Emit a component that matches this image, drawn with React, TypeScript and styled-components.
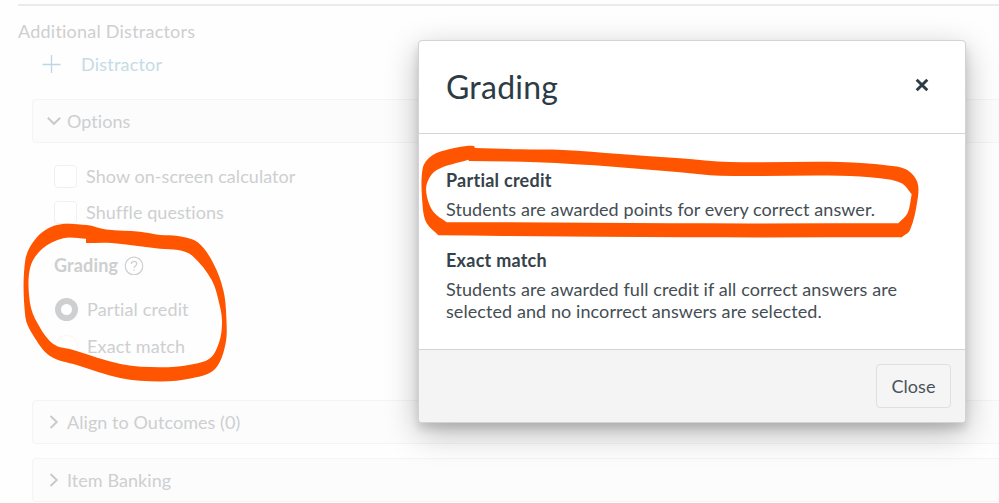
import React from "react";
import styled, { createGlobalStyle } from "styled-components";

const GlobalStyle = createGlobalStyle`
  *, *::before, *::after { box-sizing: border-box; }
  body { margin: 0; background: #fff; overflow: hidden; }
  body, button { font-family: Lato, "Liberation Sans", sans-serif; }
`;

const Screen = styled.div`
  position: relative;
  width: 999px;
  height: 503px;
  overflow: hidden;
  background: #fefefe;
`;

const Page = styled.main`
  display: flex;
  flex-direction: column;
  height: 100%;
  padding-top: 4px;
  font-size: 18px;
  line-height: 24px;
  letter-spacing: 0.06px;
  color: #cdcfd0;
`;

const Divider = styled.hr`
  width: 100%;
  height: 2px;
  margin: 0 0 0 18px;
  border: 0;
  background: #ebebec;
`;

const SectionLabel = styled.div`
  margin: 13px 0 0 18px;
  letter-spacing: 0.23px;
`;

const AddLink = styled.div`
  display: flex;
  align-items: center;
  gap: 19px;
  margin: 9px 0 0 42px;
  letter-spacing: 0.2px;
  color: #c5dbe6;
`;

const Panel = styled.section<{ $top: number }>`
  display: flex;
  flex: none;
  align-items: center;
  gap: 6px;
  width: 1000px;
  height: 44px;
  margin: ${({ $top }) => $top}px 0 0 32px;
  padding-left: 14px;
  border: 1px solid #f4f4f4;
  border-radius: 4px;
  background: #fcfcfc;
`;

const OptionsBody = styled.div`
  display: flex;
  flex: none;
  flex-direction: column;
  height: 257px;
  padding: 21px 0 0 54px;
`;

const Choice = styled.label<{ $gap?: number; $top?: number }>`
  display: flex;
  align-items: center;
  gap: ${({ $gap = 9 }) => $gap}px;
  height: 24px;
  margin-top: ${({ $top = 0 }) => $top}px;
`;

const CheckMark = styled.span`
  width: 23px;
  height: 23px;
  border: 1px solid #f0f0f0;
  border-radius: 4px;
  background: #fff;
`;

const RadioMark = styled.span<{ $checked?: boolean }>`
  width: 23px;
  height: 23px;
  border: ${({ $checked }) => ($checked ? "6px solid #cdcfd1" : "1px solid #fbf5f2")};
  border-radius: 50%;
  background: #fff;
`;

const RadioGroup = styled.div`
  padding: 20px 0 0 1px;
  letter-spacing: 0.14px;
`;

const GroupTitle = styled.div`
  display: flex;
  align-items: center;
  gap: 6px;
  height: 24px;
  margin-top: 29px;
  font-weight: 700;
  letter-spacing: 0.15px;
`;

const Dialog = styled.div`
  position: absolute;
  top: 40px;
  left: 418px;
  display: flex;
  flex-direction: column;
  width: 548px;
  height: 383px;
  border: 1px solid #d2d3d4;
  border-radius: 4px;
  background: #fff;
  color: #444d54;
  box-shadow: 0 6px 8px rgba(0, 0, 0, 0.12), 0 10px 32px rgba(0, 0, 0, 0.27);
`;

const DialogHeader = styled.header`
  display: flex;
  align-items: center;
  justify-content: space-between;
  height: 93px;
  padding: 0 36px 0 27px;
  border-bottom: 1px solid #d3d4d5;
`;

const DialogTitle = styled.h2`
  margin: 0;
  font-size: 32px;
  font-weight: 400;
  line-height: 40px;
  letter-spacing: 0.25px;
  color: #2d3b45;
`;

const IconButton = styled.button`
  display: flex;
  margin-top: -4px;
  padding: 0;
  border: 0;
  background: none;
`;

const DialogBody = styled.div`
  display: flex;
  flex: 1;
  flex-direction: column;
  gap: 28px;
  padding: 34px 27px 0;
  font-size: 18px;
`;

const Term = styled.h3`
  margin: 0 0 6px;
  font-size: 18px;
  font-weight: 700;
  line-height: 24px;
  letter-spacing: 0.25px;
  color: #36424b;
`;

const Description = styled.p`
  margin: 0;
  line-height: 22px;
  letter-spacing: 0.08px;
  white-space: pre-line;
`;

const DialogFooter = styled.footer`
  display: flex;
  align-items: center;
  justify-content: flex-end;
  height: 73px;
  padding-right: 14px;
  border-top: 1px solid #d3d4d5;
  border-radius: 0 0 3px 3px;
  background: #f4f4f4;
`;

const CloseButton = styled.button`
  width: 75px;
  height: 44px;
  padding: 0;
  border: 1px solid #dedfe0;
  border-radius: 4px;
  background: #f5f5f5;
  font-size: 18px;
  letter-spacing: 0.06px;
  color: #4a5258;
`;

const Ink = styled.svg`
  position: absolute;
  inset: 0;
  pointer-events: none;
`;

type Point = [number, number];

/** Offset along the direction from -> to, a third of the segment long. */
function handle(from: Point, to: Point, segment: number): Point {
  const dx = to[0] - from[0];
  const dy = to[1] - from[1];
  const k = segment / 3 / (Math.hypot(dx, dy) || 1);
  return [dx * k, dy * k];
}

/** Closed smooth curve; a repeated point makes a corner. */
function loop(points: Point[]): string {
  const n = points.length;
  let d = `M${points[0].join(" ")}`;
  for (let i = 0; i < n; i++) {
    const a = points[(i + n - 1) % n];
    const b = points[i];
    const c = points[(i + 1) % n];
    const e = points[(i + 2) % n];
    const length = Math.hypot(c[0] - b[0], c[1] - b[1]);
    const h1 = handle(a, c, length);
    const h2 = handle(b, e, length);
    d += `C${b[0] + h1[0]} ${b[1] + h1[1]} ${c[0] - h2[0]} ${c[1] - h2[1]} ${c[0]} ${c[1]}`;
  }
  return d + "Z";
}

const gradingOuter: Point[] = [
  [25.3, 260], [36.7, 237.5], [56.7, 225], [86.7, 225], [106, 229.5], [140, 231.7], [160, 235],
  [178, 236], [198, 242.5], [213.3, 263.3], [223.3, 290], [226.3, 316.7], [225.5, 344], [215, 369],
  [193, 378], [160, 381.5], [120, 378], [76.7, 365], [50, 356], [33, 335], [25.3, 316.7],
];
const gradingInner: Point[] = [
  [30, 268.3], [41.7, 249.3], [63.3, 238.2], [86, 238.7], [86, 238.7], [86, 243], [86, 243],
  [111.7, 243], [160, 248.7], [178, 250], [192.3, 255.7], [211.7, 280], [220, 306.7], [222, 323],
  [219.3, 341.7], [210, 358.3], [190, 364.7], [160, 367.3], [121.7, 364.3], [73.3, 350],
  [53.3, 344], [37.5, 323.3], [30, 303],
];
const creditOuter: Point[] = [
  [422.7, 168.3], [431.7, 155.7], [450, 149], [466.7, 146], [474, 146], [474, 146], [475, 148],
  [475, 148], [520, 149.3], [563, 150], [620, 154], [680, 158.3], [730, 162], [840, 162],
  [890, 165.7], [907.3, 170], [917.5, 182.7], [917.2, 201.7], [910, 230], [901.7, 237.3],
  [901.7, 237.3], [686.7, 237.3], [503, 236], [438.3, 235.3], [438.3, 235.3], [426.7, 223.3],
  [422.7, 206.7],
];
const creditInner: Point[] = [
  [427, 183.3], [436.7, 170], [468.3, 159.7], [468.3, 159.7], [469, 161], [469, 161],
  [536.7, 162.3], [613.3, 166.7], [680, 172.3], [720, 175.7], [840, 175.7], [880, 178.3],
  [901.7, 183.3], [911.7, 194.3], [911.7, 194.3], [907.5, 213.3], [898.3, 223.3], [898.3, 223.3],
  [670, 223.3], [510, 222.3], [446.7, 222.3], [446.7, 222.3], [433.3, 211.7], [427, 196.7],
];

function Chevron({ open = false }: { open?: boolean }) {
  return (
    <svg width="14" height="14" viewBox="0 0 14 14" fill="none" stroke="#c7c9ca" strokeWidth="1.9">
      <path d={open ? "M.8 3.7 7 9.8l6.200-6.100" : "M3.500 1 9.800 7 3.500 13"} />
    </svg>
  );
}

function Plus() {
  return (
    <svg width="20" height="20" viewBox="0 0 20 20" stroke="#bdd7e2" strokeWidth="1.3">
      <path d="M.5 10.500h18M9.500 1v18" />
    </svg>
  );
}

function Help() {
  return (
    <svg width="20" height="20" viewBox="0 0 20 20" fill="none" stroke="#cdcfd0" strokeWidth="1.2">
      <circle cx="10" cy="11" r="8.800" />
      <path d="M7.300 9c0-1.700 1-2.700 2.800-2.700s2.700 1.100 2.700 2.400c0 1.900-2.700 2.100-2.700 4.300M10.100 14.300v1.500" />
    </svg>
  );
}

function Cross() {
  return (
    <svg width="14" height="14" viewBox="0 0 14 14" stroke="#2d3b45" strokeWidth="2.900">
      <path d="m1.700 1.700 10.600 10.600M12.300 1.700 1.700 12.300" />
    </svg>
  );
}

export default function App() {
  return (
    <Screen>
      <GlobalStyle />
      <Page>
        <Divider />
        <SectionLabel>Additional Distractors</SectionLabel>
        <AddLink>
          <Plus />
          Distractor
        </AddLink>
        <Panel $top={23}>
          <Chevron open />
          Options
        </Panel>
        <OptionsBody>
          <Choice>
            <CheckMark />
            Show on-screen calculator
          </Choice>
          <Choice $top={12}>
            <CheckMark />
            Shuffle questions
          </Choice>
          <GroupTitle>
            Grading
            <Help />
          </GroupTitle>
          <RadioGroup>
            <Choice>
              <RadioMark $checked />
              Partial credit
            </Choice>
            <Choice $top={13}>
              <RadioMark />
              Exact match
            </Choice>
          </RadioGroup>
        </OptionsBody>
        <Panel $top={0}>
          <Chevron />
          Align to Outcomes (0)
        </Panel>
        <Panel $top={14}>
          <Chevron />
          Item Banking
        </Panel>
      </Page>
      <Dialog role="dialog" aria-label="Grading">
        <DialogHeader>
          <DialogTitle>Grading</DialogTitle>
          <IconButton aria-label="Close dialog">
            <Cross />
          </IconButton>
        </DialogHeader>
        <DialogBody>
          <div>
            <Term>Partial credit</Term>
            <Description>Students are awarded points for every correct answer.</Description>
          </div>
          <div>
            <Term>Exact match</Term>
            <Description>
              {"Students are awarded full credit if all correct answers are\nselected and no incorrect answers are selected."}
            </Description>
          </div>
        </DialogBody>
        <DialogFooter>
          <CloseButton>Close</CloseButton>
        </DialogFooter>
      </Dialog>
      <Ink width="999" height="503" viewBox="0 0 999 503" fill="#ff5500" fillRule="evenodd">
        <path d={loop(gradingOuter) + loop(gradingInner)} />
        <path d={loop(creditOuter) + loop(creditInner)} />
      </Ink>
    </Screen>
  );
}
